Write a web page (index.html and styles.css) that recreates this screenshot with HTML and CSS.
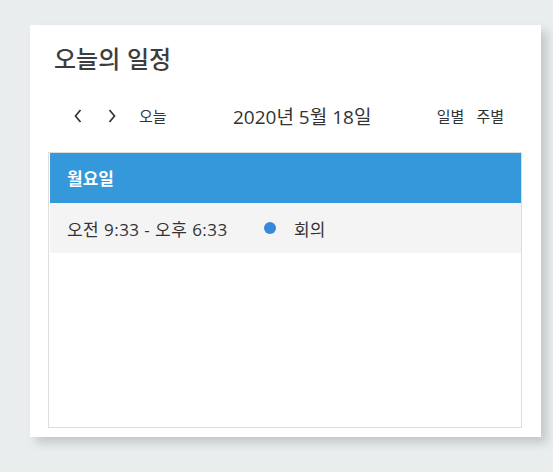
FILE: index.html
```html
<!DOCTYPE html>
<html lang="ko">
<head>
<meta charset="utf-8">
<link rel="stylesheet" href="styles.css">
</head>
<body>
<div class="card">
  <h1 class="title">오늘의 일정</h1>
  <div class="toolbar">
    <div class="left">
      <button class="nav" aria-label="prev"><svg width="10" height="14" viewBox="0 0 10 14"><path d="M7.5 1 L2.5 7 L7.5 13" fill="none" stroke="#333" stroke-width="1.7"/></svg></button>
      <button class="nav" aria-label="next"><svg width="10" height="14" viewBox="0 0 10 14"><path d="M2.5 1 L7.5 7 L2.5 13" fill="none" stroke="#333" stroke-width="1.7"/></svg></button>
      <button class="btn today">오늘</button>
    </div>
    <div class="date">2020년 5월 18일</div>
    <div class="right">
      <button class="btn">일별</button>
      <button class="btn">주별</button>
    </div>
  </div>
  <div class="list">
    <div class="day-head">월요일</div>
    <div class="event">
      <span class="time">오전 9:33 - 오후 6:33</span>
      <span class="dot"></span>
      <span class="name">회의</span>
    </div>
  </div>
</div>
</body>
</html>
```
FILE: styles.css
```css
html, body {
  margin: 0;
  padding: 0;
}
body {
  background: #e9edee;
  font-family: "Open Sans", "Noto Sans CJK KR", sans-serif;
  color: #333;
  padding: 25px 0 0 30px;
  height: 472px;
  box-sizing: border-box;
}
.card {
  width: 511px;
  height: 412px;
  box-sizing: border-box;
  background: #fff;
  box-shadow: 6px 6px 9px rgba(0, 0, 0, 0.16);
  padding: 0 19px 9px 18px;
  display: flex;
  flex-direction: column;
}
.title {
  margin: 0;
  font-family: "Noto Sans CJK KR", sans-serif;
  font-size: 24px;
  font-weight: 500;
  color: #3d3d3d;
  line-height: 30px;
  padding: 18px 0 0 6px;
}
.toolbar {
  height: 34px;
  margin-top: 26px;
  margin-bottom: 19px;
  display: flex;
  align-items: center;
}
.left {
  display: flex;
  align-items: center;
  padding-left: 25px;
  width: 185px;
  box-sizing: border-box;
}
button {
  background: none;
  border: 0;
  padding: 0;
  font: inherit;
  color: #333;
}
.nav {
  width: 10px;
  height: 14px;
  display: flex;
  margin-right: 24px;
}
.nav + .nav {
  margin-right: 22px;
}
.btn {
  font-size: 15px;
  font-family: "Noto Sans CJK KR", sans-serif;
  line-height: 20px;
}
.date {
  font-size: 19px;
  color: #333;
}
.right {
  display: flex;
  gap: 12px;
  padding-right: 18px;
  margin-left: auto;
}
.list {
  flex: 1;
  border: 1px solid #ddd;
  display: flex;
  flex-direction: column;
}
.day-head {
  background: #3498db;
  color: #fff;
  font-weight: 700;
  font-size: 17px;
  height: 50px;
  line-height: 50px;
  padding-left: 17px;
  font-family: "Noto Sans CJK KR", sans-serif;
  margin: 0 0 0 1px;
}
.event {
  background: #f4f4f4;
  height: 50px;
  display: flex;
  align-items: center;
  padding-left: 17px;
  font-size: 17px;
  margin-left: 1px;
}
.time {
  width: 197px;
  letter-spacing: 0.45px;
}
.dot {
  width: 12px;
  height: 12px;
  border-radius: 50%;
  background: #3788d8;
  margin-right: 18px;
}
.name {
  font-family: "Noto Sans CJK KR", sans-serif;
}
```
